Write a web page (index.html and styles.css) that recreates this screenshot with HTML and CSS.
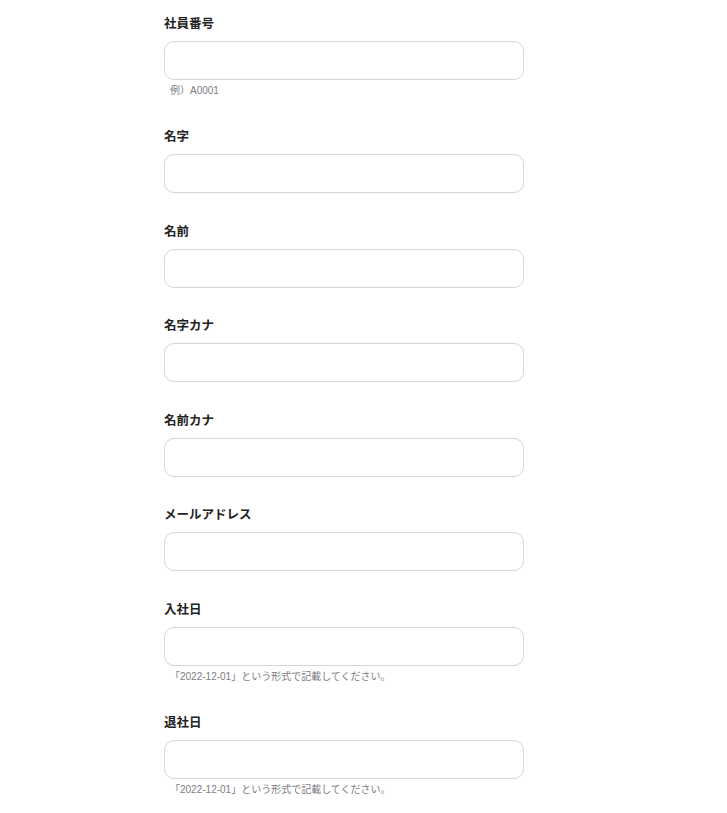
FILE: index.html
```html
<!DOCTYPE html>
<html lang="ja">
<head>
<meta charset="utf-8">
<link rel="stylesheet" href="styles.css">
</head>
<body>
<form class="form">
  <div class="field">
    <label class="label">社員番号</label>
    <input class="input" type="text">
    <p class="hint">例）A0001</p>
  </div>
  <div class="field">
    <label class="label">名字</label>
    <input class="input" type="text">
  </div>
  <div class="field">
    <label class="label">名前</label>
    <input class="input" type="text">
  </div>
  <div class="field">
    <label class="label">名字カナ</label>
    <input class="input" type="text">
  </div>
  <div class="field">
    <label class="label">名前カナ</label>
    <input class="input" type="text">
  </div>
  <div class="field">
    <label class="label">メールアドレス</label>
    <input class="input" type="text">
  </div>
  <div class="field">
    <label class="label">入社日</label>
    <input class="input" type="text">
    <p class="hint">「2022-12-01」という形式で記載してください。</p>
  </div>
  <div class="field">
    <label class="label">退社日</label>
    <input class="input" type="text">
    <p class="hint">「2022-12-01」という形式で記載してください。</p>
  </div>
</form>
</body>
</html>
```
FILE: styles.css
```css
html, body {
  margin: 0;
  background: #ffffff;
}
body {
  font-family: "Liberation Sans", "Noto Sans CJK JP", sans-serif;
  color: #1f2328;
  padding-top: 14px;
}
.form {
  width: 360px;
  margin-left: 164px;
  display: flex;
  flex-direction: column;
  gap: 28.5px;
}
.field {
  display: flex;
  flex-direction: column;
}
.label {
  font-size: 12.5px;
  font-weight: 700;
  line-height: 20px;
  margin-bottom: 7px;
  color: #222;
}
.input {
  box-sizing: border-box;
  height: 39px;
  width: 360px;
  border: 1px solid #d3d5da;
  border-radius: 10px;
  background: #fff;
  margin: 0;
  padding: 0 12px;
  font: inherit;
}
.hint {
  margin: 4px 0 0;
  padding-left: 6px;
  font-size: 10px;
  line-height: 14.5px;
  color: #7a7d82;
}
```
